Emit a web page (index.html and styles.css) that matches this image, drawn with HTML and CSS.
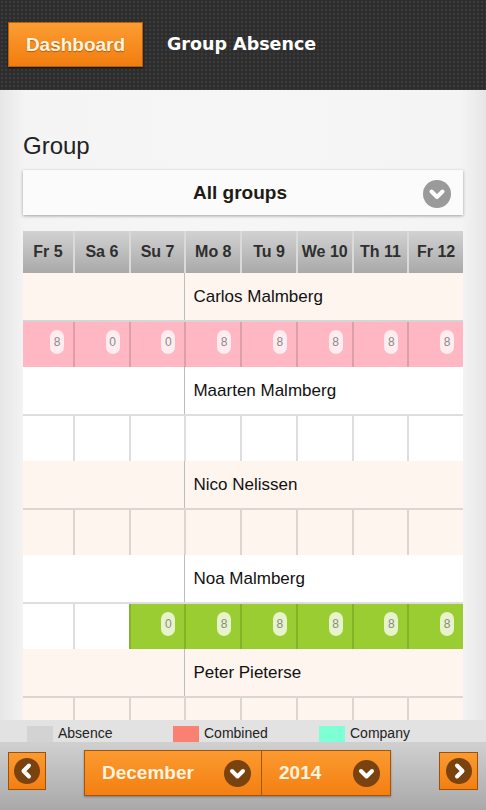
FILE: index.html
```html
<!DOCTYPE html>
<html>
<head>
<title>Group Absence</title>
<link rel="stylesheet" href="styles.css">
</head>
<body>

<div id="header">
	<a class="btn-dash" href="#">Dashboard</a>
	<h1>Group Absence</h1>
</div><!-- end header -->

<div id="content">
	<div class="label">Group</div>
	<div class="select">
		<span>All groups</span>
		<svg class="chev" width="28" height="28" viewBox="0 0 28 28"><circle cx="14" cy="14" r="14" fill="#9a9a9a"/><polyline points="8.5,11.5 14,17 19.5,11.5" fill="none" stroke="#fff" stroke-width="4" stroke-linecap="round" stroke-linejoin="round"/></svg>
	</div>

	<div class="grid">
		<div class="row head">
			<div>Fr 5</div><div>Sa 6</div><div>Su 7</div><div>Mo 8</div><div>Tu 9</div><div>We 10</div><div>Th 11</div><div>Fr 12</div>
		</div>

		<!-- Carlos -->
		<div class="row name peach"><div class="blank"></div><div class="who">Carlos Malmberg</div></div>
		<div class="row days">
			<div class="pink"><span>8</span></div><div class="pink"><span>0</span></div><div class="pink"><span>0</span></div><div class="pink"><span>8</span></div>
			<div class="pink"><span>8</span></div><div class="pink"><span>8</span></div><div class="pink"><span>8</span></div><div class="pink"><span>8</span></div>
		</div>

		<!-- Maarten -->
		<div class="row name white"><div class="blank"></div><div class="who">Maarten Malmberg</div></div>
		<div class="row days white">
			<div></div><div></div><div></div><div></div><div></div><div></div><div></div><div></div>
		</div>

		<!-- Nico -->
		<div class="row name peach"><div class="blank"></div><div class="who">Nico Nelissen</div></div>
		<div class="row days peach">
			<div></div><div></div><div></div><div></div><div></div><div></div><div></div><div></div>
		</div>

		<!-- Noa -->
		<div class="row name white"><div class="blank"></div><div class="who">Noa Malmberg</div></div>
		<div class="row days white">
			<div></div><div></div><div class="green"><span>0</span></div><div class="green"><span>8</span></div>
			<div class="green"><span>8</span></div><div class="green"><span>8</span></div><div class="green"><span>8</span></div><div class="green"><span>8</span></div>
		</div>

		<!-- Peter -->
		<div class="row name peach"><div class="blank"></div><div class="who">Peter Pieterse</div></div>
		<div class="row days peach">
			<div></div><div></div><div></div><div></div><div></div><div></div><div></div><div></div>
		</div>
	</div><!-- end grid -->
</div><!-- end content -->

<div id="legend">
	<div><i class="sw absence"></i>Absence</div>
	<div><i class="sw combined"></i>Combined</div>
	<div><i class="sw company"></i>Company</div>
</div>

<div id="footer">
	<a class="arrow" href="#"><svg width="26" height="26" viewBox="0 0 26 26"><circle cx="13" cy="13" r="13" fill="#7a420f"/><polyline points="15,7.5 9.5,13 15,18.5" fill="none" stroke="#fff" stroke-width="4" stroke-linecap="round" stroke-linejoin="round"/></svg></a>
	<div class="picker">
		<div class="month">December<svg width="27" height="27" viewBox="0 0 27 27"><circle cx="13.5" cy="13.5" r="13.5" fill="#7a420f"/><polyline points="8,11 13.5,16.5 19,11" fill="none" stroke="#fff" stroke-width="4" stroke-linecap="round" stroke-linejoin="round"/></svg></div>
		<div class="year">2014<svg width="27" height="27" viewBox="0 0 27 27"><circle cx="13.5" cy="13.5" r="13.5" fill="#7a420f"/><polyline points="8,11 13.5,16.5 19,11" fill="none" stroke="#fff" stroke-width="4" stroke-linecap="round" stroke-linejoin="round"/></svg></div>
	</div>
	<a class="arrow right" href="#"><svg width="26" height="26" viewBox="0 0 26 26"><circle cx="13" cy="13" r="13" fill="#7a420f"/><polyline points="11,7.5 16.5,13 11,18.5" fill="none" stroke="#fff" stroke-width="4" stroke-linecap="round" stroke-linejoin="round"/></svg></a>
</div><!-- end footer -->

</body>
</html>
```

FILE: styles.css
```css
* {
	margin: 0;
	padding: 0;
	box-sizing: border-box;
}

a {
	text-decoration: none;
}

body {
	width: 486px;
	height: 810px;
	overflow: hidden;
	display: flex;
	flex-direction: column;
	font-family: "Liberation Sans", Arial, sans-serif;
	color: #1a1a1a;
	background: linear-gradient(to right, #e6e6e6 0, #f4f4f4 25px, #f6f6f6 50%, #f4f4f4 calc(100% - 25px), #e6e6e6 100%);
}

#header {
	height: 90px;
	flex: none;
	display: flex;
	align-items: center;
	padding: 0 8px;
	background-color: #2d2d2d;
	background-image: radial-gradient(circle, #3b3b3b 1px, transparent 1.6px);
	background-size: 4px 4px;
}

.btn-dash {
	width: 135px;
	height: 45px;
	display: flex;
	align-items: center;
	justify-content: center;
	font-size: 19px;
	font-weight: bold;
	color: #fff4df;
	text-shadow: 0 1px 1px rgba(120, 50, 0, 0.5);
	background: linear-gradient(#fb9d33, #f27d0f);
	border: 1px solid #b85f0c;
	box-shadow: 0 1px 2px rgba(0, 0, 0, 0.6);
	margin-top: -1px;
}

#header h1 {
	margin-left: 24px;
	font-family: "DejaVu Sans", sans-serif;
	font-size: 17.5px;
	font-weight: bold;
	color: #fff;
	margin-top: -2px;
}

#content {
	flex: 1;
	overflow: hidden;
	padding: 42px 23px 0;
	display: flex;
	flex-direction: column;
}

.label {
	font-size: 24px;
	line-height: 28px;
	color: #222;
}

.select {
	position: relative;
	margin-top: 10px;
	height: 45px;
	flex: none;
	display: flex;
	align-items: center;
	justify-content: center;
	background: #fbfbfb;
	box-shadow: 0 1px 3px rgba(0, 0, 0, 0.35);
	font-size: 19px;
	font-weight: bold;
	color: #1e1a14;
}

.select span {
	margin-left: -6px;
}

.select .chev {
	position: absolute;
	right: 12px;
	top: 10px;
}

.grid {
	margin-top: 16px;
	flex: 1;
	overflow: hidden;
}

.row {
	display: grid;
	grid-template-columns: 50px repeat(7, 1fr);
	height: 47px;
	border-top: 2px solid rgba(0, 0, 0, 0.13);
}

.row.head {
	height: 42px;
	border-top: 0;
	background: linear-gradient(#d2d2d2, #a9a9a9);
}

.row.head div {
	display: flex;
	align-items: center;
	justify-content: center;
	font-size: 16px;
	font-weight: bold;
	color: #2f2f2f;
	border-left: 2px solid #dadada;
}

.row.head div:first-child {
	border-left: 0;
}

.row.name {
	border-top: 0;
	height: 47px;
}

.row.name .blank {
	grid-column: 1 / 4;
}

.row.name .who {
	grid-column: 4 / 9;
	border-left: 1px solid #bdbdbd;
	display: flex;
	align-items: center;
	padding-left: 8px;
	font-size: 17px;
	color: #111;
}

.peach {
	background: #fff5ef;
}

.white {
	background: #fff;
}

.row.days div {
	display: flex;
	align-items: center;
	justify-content: flex-end;
	padding-right: 9px;
	border-left: 2px solid rgba(0, 0, 0, 0.13);
}

.row.days div:first-child {
	border-left: 0;
}

.row.days div.pink {
	background: #ffb7c3;
}

.row.days div.green {
	background: #9acd32;
}

.row.days span {
	width: 14px;
	height: 24px;
	border-radius: 7px;
	margin-top: -6px;
	background: rgba(255, 255, 255, 0.75);
	font-size: 12px;
	color: #8a8a8a;
	display: flex;
	align-items: center;
	justify-content: center;
}

#legend {
	height: 22px;
	flex: none;
	display: grid;
	grid-template-columns: 146px 146px 146px;
	padding-left: 27px;
	background: #e2e2e2;
}

#legend div {
	display: flex;
	align-items: flex-end;
	font-size: 14px;
	color: #222;
	line-height: 18px;
}

.sw {
	width: 26px;
	height: 16px;
	margin-right: 5px;
}

.sw.absence {
	background: #d3d3d3;
}

.sw.combined {
	background: #fa8072;
}

.sw.company {
	background: #7fffd4;
}

#footer {
	height: 68px;
	flex: none;
	display: flex;
	align-items: flex-start;
	padding: 0 8px;
	background: linear-gradient(#d0d0d0, #a9a9a9);
}

.arrow {
	margin-top: 10px;
	width: 38px;
	height: 38px;
	display: flex;
	align-items: center;
	justify-content: center;
	background: linear-gradient(#fb9a30, #f47f12);
	border: 1px solid #9c510b;
}

.arrow.right {
	margin-left: auto;
	width: 39px;
}

.picker {
	margin-top: 8px;
	margin-left: 38px;
	display: flex;
	height: 46px;
	border: 1px solid #a4550c;
	background: linear-gradient(#fb9a30, #f47f12);
	box-shadow: 0 1px 2px rgba(0, 0, 0, 0.3);
}

.picker div {
	display: flex;
	align-items: center;
	justify-content: space-between;
	font-size: 19px;
	font-weight: bold;
	color: #fff4df;
}

.picker .month {
	width: 177px;
	padding: 0 10px 0 17px;
	border-right: 1px solid #a4550c;
}

.picker .year {
	width: 128px;
	padding: 0 10px 0 17px;
}
```
